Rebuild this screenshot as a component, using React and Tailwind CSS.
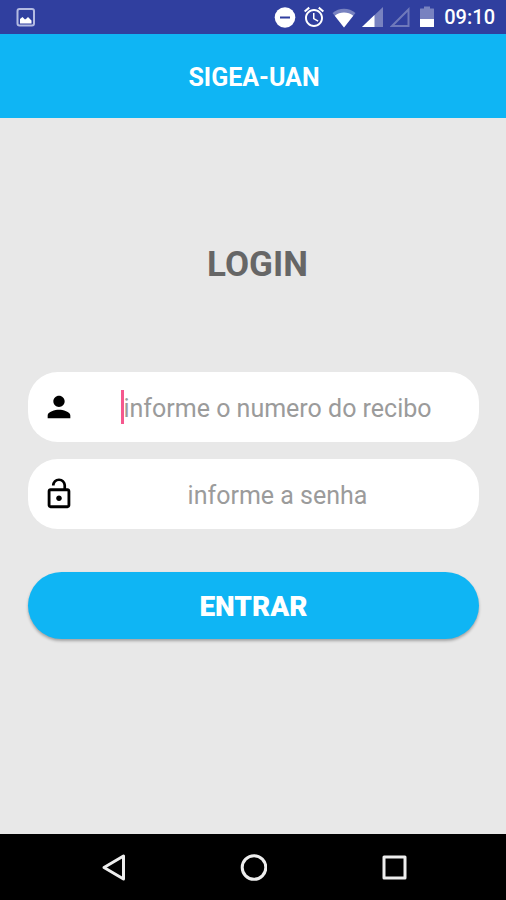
import { useState } from "react";

function StatusBar() {
  return (
    <div className="flex h-[34px] items-center justify-between bg-[#303f9f] pl-4 pr-[11px] text-white">
      {/* Screenshot notification */}
      <svg width="20" height="20" viewBox="0 0 20 20" fill="none">
        <rect x="1.500" y="2" width="16.500" height="16.500" rx="2" stroke="#b4bbe2" strokeWidth="2" />
        <path d="M4 16.500v-4.500l2.500-2 2.500 2.500 1.500-1 1.500-1.500 3.500 3.500v3z" fill="#fff" />
      </svg>

      <div className="flex items-center gap-[6px]">
        {/* Do not disturb */}
        <svg width="22" height="22" viewBox="0 0 22 22">
          <circle cx="11" cy="11.500" r="10.300" fill="#fff" />
          <rect x="6" y="10.500" width="10" height="2" fill="#303f9f" />
        </svg>
        {/* Alarm */}
        <svg width="24" height="24" viewBox="0 0 24 24" fill="#fff">
          <path d="M22 5.720l-4.600-3.860-1.290 1.530 4.600 3.860L22 5.720zM7.880 3.390L6.600 1.860 2 5.710l1.290 1.530 4.590-3.850zM12.500 8H11v6l4.750 2.850.75-1.230-4-2.370V8zM12 4c-4.970 0-9 4.030-9 9s4.020 9 9 9c4.970 0 9-4.030 9-9s-4.030-9-9-9zm0 16c-3.870 0-7-3.130-7-7s3.130-7 7-7 7 3.130 7 7-3.130 7-7 7z" />
        </svg>
        {/* Wifi */}
        <svg width="24" height="22" viewBox="0 0 24 22" fill="#fff">
          <path d="M12 21.500L0.500 7C7 1.300 17 1.300 23.500 7z" fillOpacity=".35" />
          <path d="M12 21.500L2.800 9.700C8 5.500 16 5.500 21.200 9.700z" />
        </svg>
        {/* Mobile signal */}
        <svg width="22" height="22" viewBox="0 0 22 22" fill="#fff">
          <path d="M0 21L21 1v20z" fillOpacity=".35" />
          <path d="M0 21L12.500 9v12z" />
        </svg>
        {/* Second SIM, no signal */}
        <svg width="20" height="22" viewBox="0 0 20 22" fill="none">
          <path d="M2 20L18.500 3.500V20z" stroke="#6f79bb" strokeWidth="2" />
        </svg>
        {/* Battery */}
        <svg width="22" height="22" viewBox="0 0 22 22" fill="#fff">
          <path d="M8 0.500h6v2h3.500q.5 0 .5.500V13H4V3q0-.5.500-.5H8z" fillOpacity=".35" />
          <path d="M4 13h14v7.500q0 .5-.5.500h-13q-.5 0-.5-.5z" />
        </svg>
        <span className="text-[20px] leading-6 font-medium">09:10</span>
      </div>
    </div>
  );
}

function Field({ id, label, icon, focused, ...props }) {
  return (
    <div className="flex h-[70px] items-center rounded-[30px] bg-white pl-[14px]">
      <label htmlFor={id} aria-label={label} className="shrink-0">
        <svg width="34" height="34" viewBox="0 0 24 24" fill="#000">
          <path d={icon} />
        </svg>
      </label>
      <div className="relative h-full min-w-0 flex-1">
        <input
          id={id}
          className="h-full w-full bg-transparent pt-0.5 text-center text-[25px] text-gray-700 caret-[#ff4081] outline-none placeholder:text-[#9b9b9b]"
          {...props}
        />
        {focused && (
          <span className="absolute top-[18px] left-1/2 -ml-[157px] h-[34px] w-[3px] bg-[#f5588e]" />
        )}
      </div>
    </div>
  );
}

const personIcon =
  "M12 12c2.210 0 4-1.790 4-4s-1.790-4-4-4-4 1.790-4 4 1.790 4 4 4zm0 2c-2.670 0-8 1.340-8 4v2h16v-2c0-2.660-5.330-4-8-4z";
const lockOpenIcon =
  "M12 17c1.100 0 2-.9 2-2s-.9-2-2-2-2 .9-2 2 .9 2 2 2zm6-9h-1V6c0-2.760-2.240-5-5-5S7 3.240 7 6h1.900c0-1.710 1.390-3.100 3.100-3.100 1.710 0 3.100 1.390 3.100 3.100v2H6c-1.100 0-2 .9-2 2v10c0 1.100.9 2 2 2h12c1.100 0 2-.9 2-2V10c0-1.100-.9-2-2-2zm0 12H6V10h12v10z";

export default function App() {
  const [recibo, setRecibo] = useState("");
  const [senha, setSenha] = useState("");

  return (
    <div className="flex min-h-screen flex-col bg-[#e8e8e8] font-[Roboto,sans-serif]">
      <StatusBar />

      <header className="flex h-[84px] items-center justify-center bg-[#0fb5f4] pt-1 pl-0.5">
        <h1 className="text-[25px] font-bold text-white">SIGEA-UAN</h1>
      </header>

      <main className="flex-1 pt-[123px] pr-[27px] pl-7">
        <h2 className="pl-2 text-center text-[35px] leading-12 font-bold text-[#666]">LOGIN</h2>

        <form className="mt-[83px]" onSubmit={(e) => e.preventDefault()}>
          <div className="flex flex-col gap-[17px]">
            <Field
              id="recibo"
              label="Recibo"
              icon={personIcon}
              type="text"
              placeholder="informe o numero do recibo"
              value={recibo}
              onChange={(e) => setRecibo(e.target.value)}
              focused={!recibo}
            />
            <Field
              id="senha"
              label="Senha"
              icon={lockOpenIcon}
              type="password"
              placeholder="informe a senha"
              value={senha}
              onChange={(e) => setSenha(e.target.value)}
            />
          </div>

          <button
            type="submit"
            className="mt-[43px] h-[67px] w-full rounded-full bg-[#0fb5f4] pt-0.5 text-[28px] font-black text-white shadow-[0_2px_3px_rgba(0,0,0,0.3)]"
          >
            ENTRAR
          </button>
        </form>
      </main>

      {/* Android navigation */}
      <nav className="flex h-[66px] items-center justify-between bg-black px-[99px]">
        <button type="button" aria-label="Voltar">
          <svg width="28" height="28" viewBox="0 0 28 28" fill="none" stroke="#eee" strokeWidth="3" strokeLinejoin="round">
            <path d="M5 14.500L24.500 3v23z" />
          </svg>
        </button>
        <button type="button" aria-label="Início">
          <svg width="28" height="28" viewBox="0 0 28 28" fill="none" stroke="#eee" strokeWidth="3">
            <circle cx="15" cy="14.500" r="11.800" />
          </svg>
        </button>
        <button type="button" aria-label="Recentes">
          <svg width="28" height="28" viewBox="0 0 28 28" fill="none" stroke="#eee" strokeWidth="3" strokeLinejoin="round">
            <rect x="5" y="4" width="21" height="21" />
          </svg>
        </button>
      </nav>
    </div>
  );
}
